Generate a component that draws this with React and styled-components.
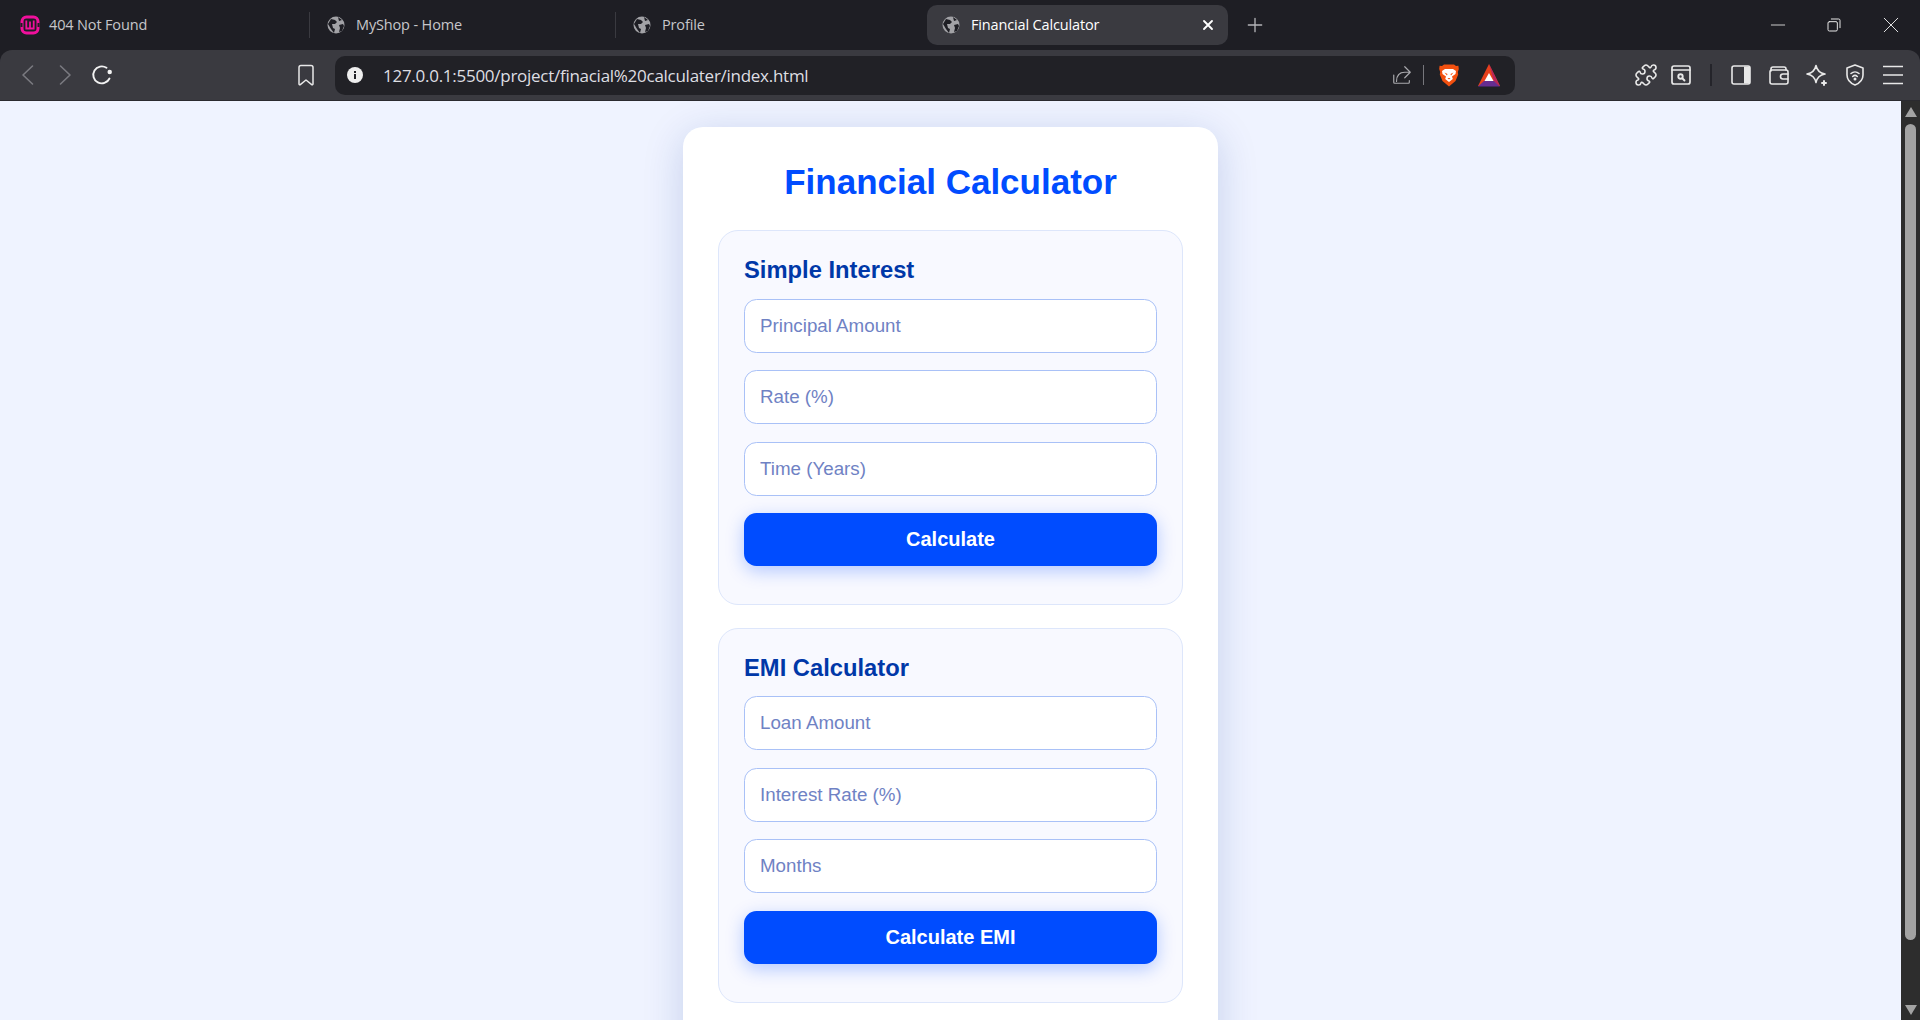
import React from 'react';
import styled, { createGlobalStyle } from 'styled-components';
import { Puzzle } from 'lucide-react';

const GlobalStyle = createGlobalStyle`
  html, body {
    margin: 0;
    height: 100%;
    overflow: hidden;
    background: #1e1e24;
  }
  * { box-sizing: border-box; }
`;

const Window = styled.div`
  width: 1920px;
  height: 1020px;
  display: flex;
  flex-direction: column;
  overflow: hidden;
  background: #1e1e24;
  font-family: "Open Sans", "Noto Sans", sans-serif;
`;

/* browser chrome */
const TabStrip = styled.div`
  height: 50px;
  flex: none;
  display: flex;
  align-items: center;
  padding-left: 4px;
  background: #1e1e24;
`;

const Tab = styled.div`
  width: ${p => (p.$active ? '301px' : '306px')};
  height: ${p => (p.$active ? '40px' : '26px')};
  margin: -1px ${p => (p.$active ? '17px' : '0')} 0 ${p => (p.$active ? '5px' : '0')};
  padding: 0 12px 0 ${p => (p.$active ? '15px' : '17px')};
  display: flex;
  align-items: center;
  gap: 11px;
  border-radius: ${p => (p.$active ? '10px' : '0')};
  background: ${p => (p.$active ? '#3a3a40' : 'transparent')};
  color: ${p => (p.$active ? '#ffffff' : '#c6c6ca')};
  border-right: ${p => (p.$divider ? '1px solid #3a3a40' : 'none')};
  font-size: 14.5px;
  letter-spacing: -0.15px;
`;

const TabTitle = styled.span`
  flex: 1;
  white-space: nowrap;
`;

const WindowButtons = styled.div`
  margin-left: auto;
  display: flex;
  align-items: center;
  gap: 40px;
  padding-right: 20px;
  color: #e6e6e6;
`;

const Toolbar = styled.div`
  height: 50px;
  flex: none;
  display: flex;
  align-items: center;
  background: #3a3a40;
  border-radius: 12px 12px 0 0;
  color: #e8e8e8;
`;

const NavGroup = styled.div`
  display: flex;
  align-items: center;
  gap: 13px;
  padding-left: 16px;
  width: 294px;
  flex: none;
`;

const AddressBar = styled.div`
  width: 1180px;
  height: 39px;
  margin-left: 17px;
  flex: none;
  display: flex;
  align-items: center;
  background: #212126;
  border-radius: 10px;
  padding: 0 14px 0 12px;
  color: #dedee2;
  font-size: 17px;
  letter-spacing: -0.27px;
`;

const UrlText = styled.span`
  margin-left: 20px;
  flex: 1;
  white-space: nowrap;
`;

const AddressActions = styled.div`
  display: flex;
  align-items: center;
  gap: 18px;
`;

const ShareGroup = styled.div`
  display: flex;
  align-items: center;
  margin-right: -3px;
`;

const Separator = styled.div`
  width: 1px;
  height: 20px;
  background: #77777c;
  margin-left: 10px;
`;

const ToolIcons = styled.div`
  flex: 1;
  display: flex;
  align-items: center;
  justify-content: flex-end;
  gap: 14px;
  padding-right: 15px;
`;

const ToolDivider = styled.div`
  width: 2px;
  height: 22px;
  background: #24242a;
  margin: 0 3px 0 3px;
`;

/* page */
const Viewport = styled.div`
  flex: 1;
  min-height: 0;
  display: flex;
  border-top: 1px solid #2a2a2f;
`;

const Page = styled.main`
  flex: 1;
  overflow: hidden;
  display: flex;
  justify-content: center;
  padding-top: 26px;
  background: #eff3ff;
`;

const Card = styled.div`
  width: 535px;
  height: 1100px;
  flex: none;
  padding: 36px 35px;
  background: #ffffff;
  border-radius: 20px;
  box-shadow: 0 8px 40px rgba(0, 50, 150, 0.18);
`;

const Title = styled.h1`
  margin: 0 0 29px;
  text-align: center;
  font: 700 35px/38px "Liberation Sans", Arial, sans-serif;
  color: #004cff;
`;

const Section = styled.section`
  height: 375px;
  margin-bottom: 22.5px;
  padding: 25px 25px 0;
  background: #f8f9ff;
  border: 1px solid #dde6fb;
  border-radius: 20px;
`;

const SectionTitle = styled.h2`
  margin: 0 0 15.5px;
  font: 700 23.75px/27px "Liberation Sans", Arial, sans-serif;
  color: #0038a8;
`;

const Field = styled.input`
  display: block;
  width: 100%;
  height: 54px;
  margin-bottom: 17.5px;
  padding: 0 15px;
  background: #ffffff;
  border: 1px solid #a9c1f7;
  border-radius: 12.5px;
  outline: none;
  font: 400 18.75px "Liberation Sans", Arial, sans-serif;

  &::placeholder {
    color: #6f82c4;
    opacity: 1;
  }
`;

const Action = styled.button`
  display: block;
  width: 100%;
  height: 53px;
  border: none;
  border-radius: 12.5px;
  background: #004cff;
  color: #ffffff;
  font: 700 20px "Liberation Sans", Arial, sans-serif;
  box-shadow: 0 5px 18px rgba(0, 76, 255, 0.28);
`;

const Scrollbar = styled.div`
  width: 19px;
  flex: none;
  display: flex;
  flex-direction: column;
  align-items: center;
  background: #2d2d2d;
  padding-top: 6px;
`;

const ScrollThumb = styled.div`
  width: 11px;
  height: 816px;
  margin-top: 7px;
  background: #a3a3a3;
  border-radius: 6px;
`;

const ScrollDown = styled.div`
  margin-top: auto;
  margin-bottom: 5px;
  line-height: 0;
`;

/* icons */
const Ico = ({ size = 24, children, ...rest }) => (
  <svg width={size} height={size} viewBox="0 0 24 24" fill="none" stroke="currentColor" strokeWidth="1.6" strokeLinecap="round" strokeLinejoin="round" style={{ flex: 'none' }} {...rest}>
    {children}
  </svg>
);

const Globe = () => (
  <svg width="18" height="18" viewBox="0 0 18 18" style={{ flex: 'none' }}>
    <circle cx="9" cy="9" r="8.5" fill="#a2a2a6" />
    <path d="M4 3l4 1 2 2-2 2-3 0 1 4 2 1-1 4-3-4-3-5zM11 1l4 3-3 1zM12 9l4-1 1 2-2 5-3 1 1-4z" fill="#1e1e24" />
  </svg>
);

const Wamp = () => (
  <svg width="20" height="20" viewBox="0 0 20 20" style={{ flex: 'none', margin: '0 -2px 0 -1px' }}>
    <rect x="2" y="2" width="16" height="16" rx="4.5" fill="none" stroke="#f0109c" strokeWidth="3" />
    <rect x="0.5" y="8" width="2" height="4" fill="#1e1e24" />
    <rect x="17.5" y="8" width="2" height="4" fill="#1e1e24" />
    <path d="M6.3 5.5v8h7.4v-8M10 6.5v6.5" fill="none" stroke="#f0109c" strokeWidth="1.8" />
  </svg>
);

const Brave = () => (
  <svg width="20" height="23" viewBox="0 0 20 23" style={{ flex: 'none' }}>
    <path d="M5 0.5h10l2 1.6 2.4-.4L19.8 5 18.8 8l.4 2.5L16.5 17l-6.5 5.5L3.500 17 .8 10.500 1.200 8 .2 5l.4-3.300L3 2.100z" fill="#f2500f" />
    <path d="M6 5h8l3 2-.5 3-3.500 2.500.8 2.500L10 18l-3.800-3 .8-2.500L3.500 10 3 7z" fill="#ffffff" />
    <path d="M5.500 8.500l3 1.500-.5 1.500zM14.500 8.500l-3 1.500.5 1.500zM8.500 14h3l-1.500 1.500z" fill="#f2500f" />
  </svg>
);

const Bat = () => (
  <svg width="24" height="23" viewBox="0 0 24 23" style={{ flex: 'none' }}>
    <path d="M12 0L1 22h22z" fill="#e8401c" />
    <path d="M12 0l11 22-6-5z" fill="#b8245c" />
    <path d="M7 17L1 22.500h22L17 17z" fill="#662d91" />
    <path d="M12 9l4.500 8h-9z" fill="#ffffff" />
  </svg>
);

const App = () => (
  <Window>
    <GlobalStyle />
    <TabStrip>
      <Tab $divider><Wamp /><TabTitle>404 Not Found</TabTitle></Tab>
      <Tab $divider><Globe /><TabTitle>MyShop - Home</TabTitle></Tab>
      <Tab><Globe /><TabTitle>Profile</TabTitle></Tab>
      <Tab $active>
        <Globe />
        <TabTitle>Financial Calculator</TabTitle>
        <Ico size={16} strokeWidth="2.8"><path d="M6 6l12 12M18 6L6 18" /></Ico>
      </Tab>
      <Ico size={20} style={{ color: '#b4b4b8', flex: 'none' }}><path d="M12 4v16M4 12h16" /></Ico>
      <WindowButtons>
        <Ico size={16} strokeWidth="1.300"><path d="M2 12h20" /></Ico>
        <Ico size={16} strokeWidth="1.500"><rect x="3" y="7" width="14" height="14" rx="2" /><path d="M8 3h11a2 2 0 0 1 2 2v11" /></Ico>
        <Ico size={18} strokeWidth="1.300"><path d="M3 3l18 18M21 3L3 21" /></Ico>
      </WindowButtons>
    </TabStrip>
    <Toolbar>
      <NavGroup>
        <Ico strokeWidth="1.6" style={{ color: '#7a7a80', flex: 'none' }}><path d="M16.500 3L7 12l9.500 9" /></Ico>
        <Ico strokeWidth="1.6" style={{ color: '#7a7a80', flex: 'none' }}><path d="M7.500 3L17 12l-9.500 9" /></Ico>
        <Ico strokeWidth="1.900" style={{ color: '#f2f2f2', flex: 'none' }}>
          <path d="M19.500 15.500A8.500 8.500 0 1 1 16.500 4.800" />
          <circle cx="19.700" cy="9" r="1.300" fill="currentColor" />
        </Ico>
      </NavGroup>
      <Ico strokeWidth="1.500"><path d="M7 2.500h10a2 2 0 0 1 2 2V21a.8.8 0 0 1-1.300.6L12 17l-5.700 4.600A.8.8 0 0 1 5 21V4.500a2 2 0 0 1 2-2z" /></Ico>
      <AddressBar>
        <svg width="16" height="16" viewBox="0 0 16 16" style={{ flex: 'none' }}>
          <circle cx="8" cy="8" r="8" fill="#eeeeee" />
          <rect x="7" y="7" width="2" height="5" fill="#212126" />
          <rect x="7" y="4" width="2" height="2" fill="#212126" />
        </svg>
        <UrlText>127.0.0.1:5500/project/finacial%20calculater/index.html</UrlText>
        <AddressActions>
          <ShareGroup>
            <Ico size={22} strokeWidth="1.300" style={{ color: '#a9a9ad', flex: 'none' }}>
              <path d="M15 3l6 6-6 6M21 9h-6c-5 0-9 3-9 10M3 12v8a1 1 0 0 0 1 1h15a1 1 0 0 0 1-1v-2" />
            </Ico>
            <Separator />
          </ShareGroup>
          <Brave />
          <Bat />
        </AddressActions>
      </AddressBar>
      <ToolIcons>
        <Puzzle size={24} strokeWidth={1.6} style={{ marginRight: -3 }} />
        <Ico strokeWidth="1.700"><rect x="3" y="3" width="18" height="18" rx="2" /><path d="M3 7h18" /><circle cx="11.500" cy="13.500" r="2.200" strokeWidth="1.900" /><path d="M13.500 15.500l2 2" strokeWidth="1.900" /></Ico>
        <ToolDivider />
        <Ico><rect x="3" y="3" width="18" height="18" rx="2" /><rect x="15" y="3.500" width="6" height="17" fill="currentColor" stroke="none" /></Ico>
        <Ico><path d="M4 8V6a2 2 0 0 1 2-2h11a2 2 0 0 1 2 2v1" /><rect x="3" y="7" width="18" height="14" rx="2" /><path d="M21 11h-5a2.500 2.500 0 0 0 0 5h5" /></Ico>
        <Ico><path d="M11 2.500c1 5 3.500 7.500 9 8.500-5.500 1-8 3.500-9 8.500-1-5-3.500-7.500-9-8.500 5.500-1 8-3.500 9-8.500z" /><path d="M19 18v4M17 20h4" strokeWidth="2" /></Ico>
        <Ico><path d="M12 2l8 3v7c0 5-3 8-8 10-5-2-8-5-8-10V5z" /><path d="M8 10.500a6 6 0 0 1 8 0M9.700 13.500a3.300 3.300 0 0 1 4.600 0" /><circle cx="12" cy="16" r=".7" /></Ico>
        <Ico strokeLinecap="butt"><path d="M2 3.500h20M2 12h20M2 20.500h20" /></Ico>
      </ToolIcons>
    </Toolbar>
    <Viewport>
      <Page>
        <Card>
          <Title>Financial Calculator</Title>
          <Section>
            <SectionTitle>Simple Interest</SectionTitle>
            <Field placeholder="Principal Amount" />
            <Field placeholder="Rate (%)" />
            <Field placeholder="Time (Years)" />
            <Action>Calculate</Action>
          </Section>
          <Section>
            <SectionTitle>EMI Calculator</SectionTitle>
            <Field placeholder="Loan Amount" />
            <Field placeholder="Interest Rate (%)" />
            <Field placeholder="Months" />
            <Action>Calculate EMI</Action>
          </Section>
        </Card>
      </Page>
      <Scrollbar>
        <svg width="12" height="10" viewBox="0 0 12 10"><path d="M6 0l6 10H0z" fill="#a3a3a3" /></svg>
        <ScrollThumb />
        <ScrollDown><svg width="12" height="10" viewBox="0 0 12 10"><path d="M0 0h12L6 10z" fill="#a3a3a3" /></svg></ScrollDown>
      </Scrollbar>
    </Viewport>
  </Window>
);

export default App;
